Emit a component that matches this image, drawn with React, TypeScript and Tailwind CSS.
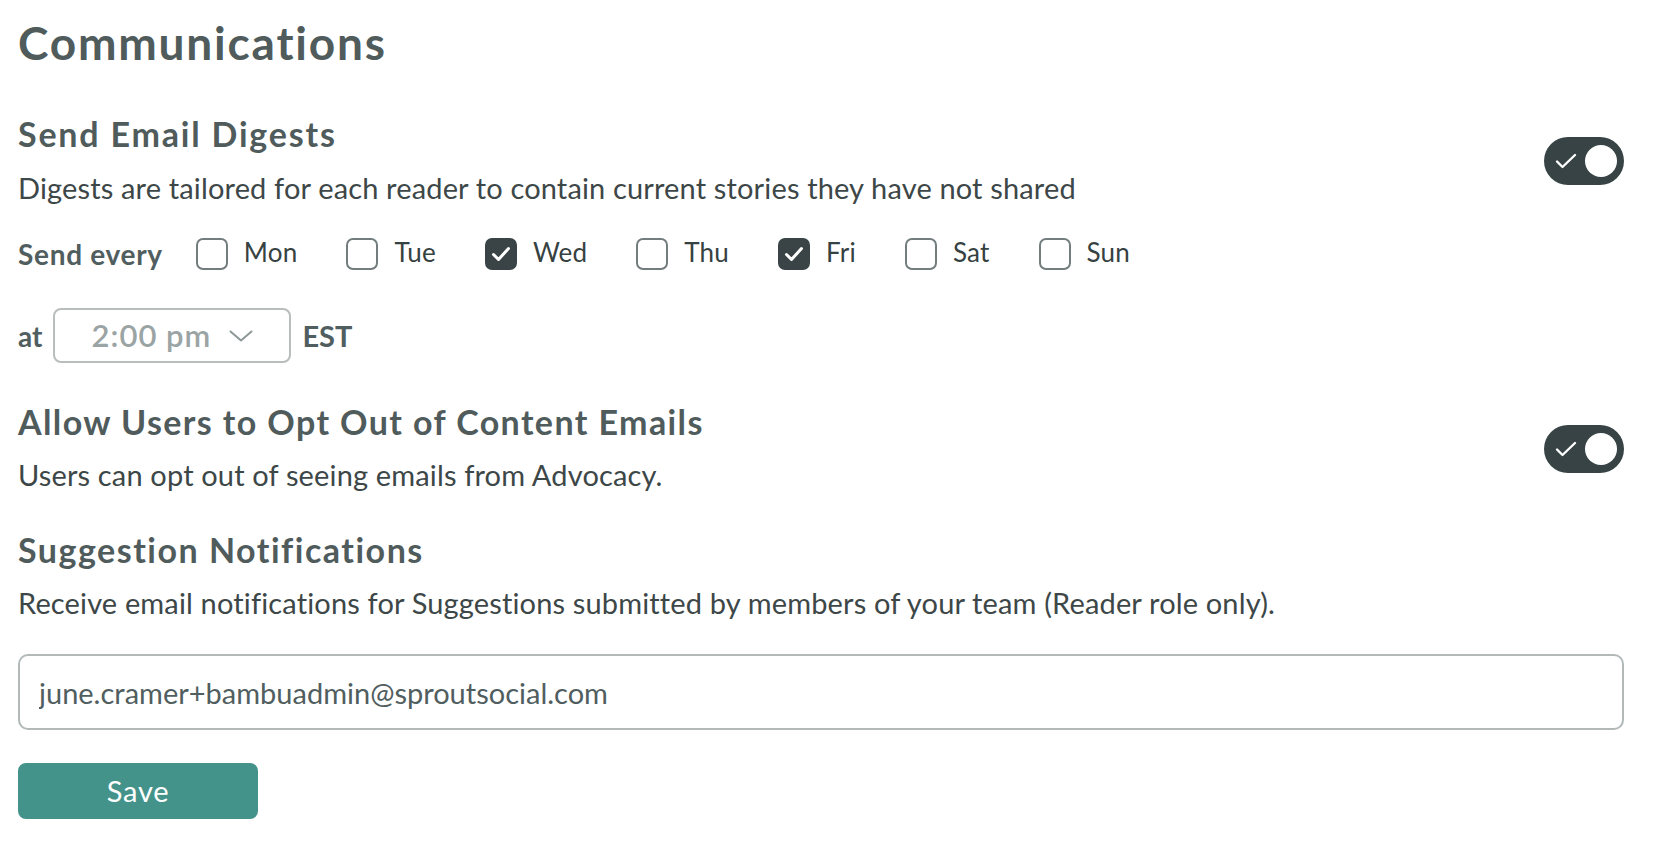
import { useState } from "react";

const DAYS = [
  { label: "Mon", checked: false },
  { label: "Tue", checked: false },
  { label: "Wed", checked: true },
  { label: "Thu", checked: false },
  { label: "Fri", checked: true },
  { label: "Sat", checked: false },
  { label: "Sun", checked: false },
];

export default function App() {
  const [days, setDays] = useState(DAYS);
  const [digests, setDigests] = useState(true);
  const [optOut, setOptOut] = useState(true);
  const [email, setEmail] = useState("june.cramer+bambuadmin@sproutsocial.com");

  return (
    <div className="min-h-screen bg-white pl-[18px] pr-[48px] font-['Lato','Liberation_Sans',sans-serif]">
      <h1 className="mt-[17px] text-[46px] leading-[52px] font-bold tracking-[1.8px] text-[#505b5c]">
        Communications
      </h1>

      <div className="mt-[45px] flex items-center justify-between">
        <div>
          <h2 className="text-[34px] leading-[40px] font-bold tracking-[1.8px] text-[#505b5c]">Send Email Digests</h2>
          <p className="mt-[14px] text-[29px] leading-[40px] tracking-[0.15px] text-[#3d4748]">
            Digests are tailored for each reader to contain current stories they have not shared
          </p>
        </div>
        <Toggle checked={digests} onChange={setDigests} />
      </div>

      <div className="mt-[26px] flex h-[40px] items-center">
        <span className="mr-[33px] text-[28px] font-bold tracking-[0.7px] text-[#515e5f]">Send every</span>
        {days.map((day, index) => (
          <label key={day.label} className="mr-[49px] flex cursor-pointer items-center gap-[16px]">
            <Checkbox
              checked={day.checked}
              onChange={() =>
                setDays((current) =>
                  current.map((item, i) => (i === index ? { ...item, checked: !item.checked } : item)),
                )
              }
            />
            <span className="-mt-[3px] text-[26px] tracking-[0.2px] text-[#364141]">{day.label}</span>
          </label>
        ))}
      </div>

      <div className="mt-[34px] flex items-center">
        <span className="mr-[11px] text-[28px] font-bold text-[#515e5f]">at</span>
        <button
          type="button"
          className="flex h-[55px] w-[238px] items-center justify-center gap-[18px] rounded-[8px] border-2 border-[#b8bebe] bg-white"
        >
          <span className="text-[31px] font-semibold tracking-[1px] text-[#9ba4a4]">2:00 pm</span>
          <svg width="24" height="12" viewBox="0 0 24 12" fill="none" className="text-[#8d9797]">
            <path d="M1.5 1.5 12 10.5 22.5 1.5" stroke="currentColor" strokeWidth="2" strokeLinecap="round" strokeLinejoin="round" />
          </svg>
        </button>
        <span className="ml-[11px] text-[29px] font-bold text-[#515e5f]">EST</span>
      </div>

      <div className="mt-[39px] flex items-center justify-between">
        <div>
          <h2 className="text-[34px] leading-[40px] font-bold tracking-[1.4px] text-[#505b5c]">
            Allow Users to Opt Out of Content Emails
          </h2>
          <p className="mt-[13px] text-[29px] leading-[40px] tracking-[0.15px] text-[#3d4748]">
            Users can opt out of seeing emails from Advocacy.
          </p>
        </div>
        <Toggle checked={optOut} onChange={setOptOut} />
      </div>

      <h2 className="mt-[35px] text-[34px] leading-[40px] font-bold tracking-[1.5px] text-[#505b5c]">
        Suggestion Notifications
      </h2>
      <p className="mt-[13px] text-[29px] leading-[40px] tracking-[0.15px] text-[#3d4748]">
        Receive email notifications for Suggestions submitted by members of your team (Reader role only).
      </p>

      <input
        value={email}
        onChange={(event) => setEmail(event.target.value)}
        className="mt-[31px] block h-[76px] w-full rounded-[10px] border-2 border-[#b3b9b9] bg-white px-[19px] text-[29px] text-[#515e5f] outline-none"
      />

      <button
        type="button"
        className="mt-[33px] block h-[56px] w-[240px] rounded-[8px] bg-[#44938b] text-[29px] tracking-[0.8px] text-white"
      >
        Save
      </button>
    </div>
  );
}

function Toggle({ checked, onChange }: { checked: boolean; onChange: (checked: boolean) => void }) {
  return (
    <button
      type="button"
      aria-pressed={checked}
      onClick={() => onChange(!checked)}
      className="relative h-[48px] w-[80px] shrink-0 rounded-full bg-[#384345]"
    >
      <svg width="22" height="16" viewBox="0 0 22 16" fill="none" className="absolute left-[11px] top-[16px]">
        <path d="M2 8.5 7.5 14 20 2" stroke="white" strokeWidth="2.4" strokeLinecap="round" strokeLinejoin="round" />
      </svg>
      <span className="absolute right-[7px] top-[8px] h-[32px] w-[32px] rounded-full bg-white" />
    </button>
  );
}

function Checkbox({ checked, onChange }: { checked: boolean; onChange: () => void }) {
  return (
    <span
      role="checkbox"
      aria-checked={checked}
      onClick={onChange}
      className={[
        "flex h-[32px] w-[32px] items-center justify-center rounded-[7px] border-2",
        checked ? "border-[#3a4446] bg-[#3a4446]" : "border-[#737d7e] bg-white",
      ].join(" ")}
    >
      {checked ? (
        <svg width="20" height="16" viewBox="0 0 20 16" fill="none">
          <path d="M2.5 8.5 7.5 13.5 17.5 2.5" stroke="white" strokeWidth="3" strokeLinecap="round" strokeLinejoin="round" />
        </svg>
      ) : null}
    </span>
  );
}
